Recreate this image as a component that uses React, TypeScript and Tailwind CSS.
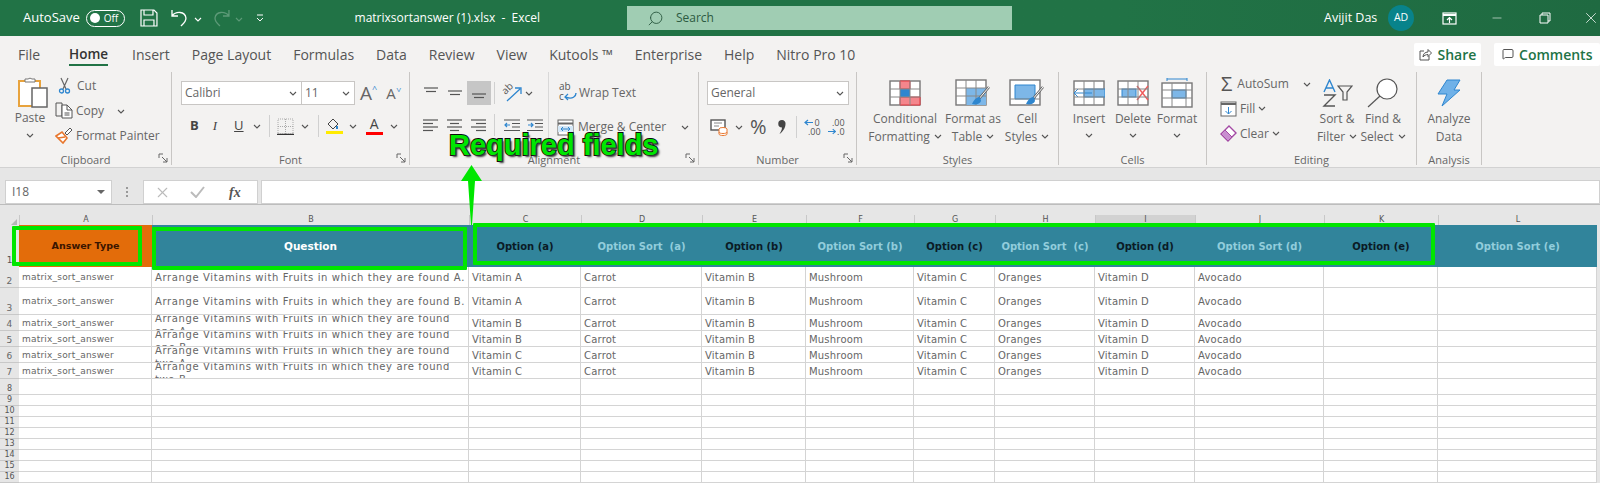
import React from 'react';
import { Search, Minus, X, MessageSquare } from 'lucide-react';

const ui = "font-['Open_Sans','Noto_Sans',sans-serif]";
const cellFont = "font-['DejaVu_Sans',sans-serif]";

const Chev = ({ color = '#555' }: { color?: string }) => (
  <svg width="8" height="5" viewBox="0 0 8 5" fill="none" stroke={color} strokeWidth="1.1" className="inline-block shrink-0">
    <path d="M1 1l3 3 3-3" />
  </svg>
);

const Launcher = () => (
  <svg width="10" height="10" viewBox="0 0 10 10" fill="none" stroke="#666" className="absolute right-[3px] bottom-[2px]">
    <path d="M1 5V1h4M4 4l5 5M9 5v4H5" />
  </svg>
);

function Group({ className, label, launcher, children }: { className: string; label: string; launcher?: boolean; children: React.ReactNode }) {
  return (
    <div className={`relative flex flex-col h-[93px] shrink-0 border-r border-[#c8c6c4] ${className}`}>
      <div className="flex-1 min-h-0">{children}</div>
      <div className="h-[13px] mb-[-1px] flex items-center justify-center text-[11px] text-[#666] leading-none">{label}</div>
      {launcher && <Launcher />}
    </div>
  );
}

function BigButton({ className, icon, lines, chevBelow, plain }: { className: string; icon: React.ReactNode; lines: string[]; chevBelow?: boolean; plain?: boolean }) {
  return (
    <div className={`flex flex-col items-center shrink-0 ${className}`}>
      <div className="h-[32px] mt-[5px] flex items-center justify-center">{icon}</div>
      <div className="mt-[1px] text-[12px] leading-[17.500px] text-[#666] text-center whitespace-nowrap">
        {lines.map((l, i) => (
          <div key={l} className="flex items-center justify-center gap-1">
            {l}
            {!plain && !chevBelow && i === lines.length - 1 && <Chev />}
          </div>
        ))}
        {chevBelow && <div className="flex h-[16px] items-center justify-center"><Chev /></div>}
      </div>
    </div>
  );
}

const Lines = ({ rows, y = 2 }: { rows: [number, number][]; y?: number }) => (
  <svg width="16" height="14" viewBox="0 0 16 14" stroke="#555" strokeWidth="1.2">
    {rows.map(([a, b], i) => (
      <path key={i} d={`M${a} ${y + i * 3.5}H${b}`} />
    ))}
  </svg>
);

const Grid = ({ children, w = 32 }: { children?: React.ReactNode; w?: number }) => (
  <svg width={w} height="26" viewBox="0 0 32 26" fill="none">
    <rect x="1" y="1" width="30" height="24" fill="#fff" stroke="#777" strokeWidth="1.4" />
    {children}
    <path d="M1 9h30M1 17h30M11 1v24M21 1v24" stroke="#888" strokeWidth="1" />
  </svg>
);

const Brush = () => (
  <g>
    <path d="M34 8L23 21" stroke="#666" strokeWidth="2.6" />
    <path d="M34 8L23 21" stroke="#fff" strokeWidth="1" />
    <path d="M25 18c-4 0-6 3-8 7 4 1 8 0 9-3z" fill="#2e86cf" />
  </g>
);

const PasteIcon = () => (
  <svg width="30" height="33" viewBox="0 0 30 33" fill="none">
    <path d="M1 6h21v25H1z" fill="#fff" stroke="#e8a33d" strokeWidth="2" />
    <path d="M7 7V4h3a3 3 0 0 1 4 0h3v3z" fill="#fff" stroke="#777" />
    <rect x="14" y="13" width="15" height="19" fill="#fff" stroke="#666" strokeWidth="1.5" />
  </svg>
);

const CutIcon = () => (
  <svg width="13" height="17" viewBox="0 0 13 17" fill="none">
    <path d="M3 1l5 11M10 1L5 12" stroke="#666" strokeWidth="1.2" />
    <circle cx="3.500" cy="14" r="2" stroke="#2e86cf" strokeWidth="1.3" />
    <circle cx="9.500" cy="14" r="2" stroke="#2e86cf" strokeWidth="1.3" />
  </svg>
);

const CopyIcon = () => (
  <svg width="18" height="17" viewBox="0 0 18 17" fill="none" stroke="#555">
    <path d="M1 1h6v13H1z" />
    <path d="M7 3h5l5 5v8H7z" fill="#fff" />
    <path d="M12 3v5h5M9.500 11h5M9.500 13h5" />
  </svg>
);

const PainterIcon = () => (
  <svg width="18" height="17" viewBox="0 0 18 17" fill="none">
    <path d="M1 9l6-4 5 6-4 5z" fill="#fff" stroke="#e8772e" strokeWidth="1.6" />
    <path d="M3 11l7-1" stroke="#e8772e" strokeWidth="1.4" />
    <path d="M10 6l5-5 2 2-5 5z" fill="#fff" stroke="#555" />
  </svg>
);

const ShareIcon = () => (
  <svg width="13" height="13" viewBox="0 0 13 13" fill="none" stroke="#555">
    <path d="M5 3H1v9h9V8" />
    <path d="M4 9c0-3 2-5 5-5V1.500l3.500 3.500L9 8.500V6.500c-2 0-4 1-5 2.500z" />
  </svg>
);

const AlignSel = () => (
  <div className="w-[24px] h-[24px] bg-[#c6c6c6] flex items-center justify-center">
    <Lines rows={[[1, 15], [3, 13]]} y={8} />
  </div>
);

const OrientIcon = () => (
  <span className="relative block w-[20px] h-[18px]">
    <svg width="20" height="18" viewBox="0 0 20 18" fill="none">
      <path d="M5 17L18 5M13 4h6v6" stroke="#2e86cf" strokeWidth="1.3" />
    </svg>
    <span className="absolute left-[-1px] top-[-1px] text-[10px] leading-[10px] text-[#555] -rotate-45">ab</span>
  </span>
);

const IndentIcon = ({ flip }: { flip?: boolean }) => (
  <svg width="16" height="14" viewBox="0 0 16 14" fill="none" stroke="#555" strokeWidth="1.2">
    <path d="M0 2h16M8 5.500h8M8 9h8M0 12.500h16" />
    <path d={flip ? 'M1 7h5M4 5l2 2-2 2' : 'M1 7h5M3 5L1 7l2 2'} stroke="#2e86cf" />
  </svg>
);

const WrapIcon = () => (
  <svg width="18" height="18" viewBox="0 0 18 18" fill="none">
    <path d="M6 13c8 3 11-1 11-4" stroke="#2e86cf" strokeWidth="1.4" />
    <path d="M9 10l-3 3 3 3" stroke="#2e86cf" strokeWidth="1.2" />
  </svg>
);

const MergeIcon = () => (
  <svg width="17" height="17" viewBox="0 0 17 17" fill="none">
    <rect x="1" y="1" width="15" height="15" fill="#fff" stroke="#666" />
    <path d="M1 4.500h15" stroke="#666" strokeWidth="2" />
    <rect x="1" y="7" width="15" height="6" fill="#d5e8f7" />
    <path d="M4 10h9M6 8l-2 2 2 2M11 8l2 2-2 2" stroke="#2e86cf" />
  </svg>
);

const AccountingIcon = () => (
  <svg width="18" height="18" viewBox="0 0 18 18" fill="none">
    <rect x="1" y="2" width="14" height="10" fill="#fff" stroke="#555" strokeWidth="1.4" />
    <path d="M4 5h8M4 8h5" stroke="#888" />
    <ellipse cx="13" cy="11" rx="4" ry="1.500" fill="#fff" stroke="#e8772e" />
    <path d="M9 11v5c0 2 8 2 8 0v-5M9 14c0 2 8 2 8 0" stroke="#e8772e" fill="#fff" />
  </svg>
);

const ArrowLeft = () => (
  <svg width="9" height="7" viewBox="0 0 9 7" fill="none" stroke="#2e86cf" strokeWidth="1.2"><path d="M9 3.500H1M4 1L1 3.500 4 6" /></svg>
);
const ArrowRight = () => (
  <svg width="9" height="7" viewBox="0 0 9 7" fill="none" stroke="#2e86cf" strokeWidth="1.2"><path d="M0 3.500h8M5 1l3 2.500L5 6" /></svg>
);

const SortIcon = () => (
  <svg width="15" height="28" viewBox="0 0 15 28" fill="none">
    <path d="M2 13L7.500 1 13 13M4 9h7" stroke="#2e86cf" strokeWidth="1.4" />
    <path d="M2 16h11L2 27h11" stroke="#555" strokeWidth="1.4" />
  </svg>
);

function Cell({ className = '', children }: { className?: string; children?: React.ReactNode }) {
  return <div className={`border-r border-b border-[#d4d4d4] overflow-hidden flex items-center pl-[3px] pr-[2px] pt-[1px] ${className}`}>{children}</div>;
}

const colTemplate = 'grid grid-cols-[19px_133px_317px_112px_121px_104px_108px_81px_100px_100px_129px_114px_159px_3px]';
const columns = ['A', 'B', 'C', 'D', 'E', 'F', 'G', 'H', 'I', 'J', 'K', 'L'];

const headers = [
  ['Answer Type', 'bg-[#e36c0a] text-[#3a1500] text-[9.500px] pt-[1px]'],
  ['Question', 'bg-[#31849b] text-white text-[10.500px] pt-[1px]'],
  ['Option (a)', 'bg-[#31849b] text-[#0b1b26]'],
  ['Option Sort  (a)', 'bg-[#31849b] text-[#92cddc]'],
  ['Option (b)', 'bg-[#31849b] text-[#0b1b26]'],
  ['Option Sort (b)', 'bg-[#31849b] text-[#92cddc]'],
  ['Option (c)', 'bg-[#31849b] text-[#0b1b26]'],
  ['Option Sort  (c)', 'bg-[#31849b] text-[#92cddc]'],
  ['Option (d)', 'bg-[#31849b] text-[#0b1b26]'],
  ['Option Sort (d)', 'bg-[#31849b] text-[#92cddc]'],
  ['Option (e)', 'bg-[#31849b] text-[#0b1b26]'],
  ['Option Sort (e)', 'bg-[#31849b] text-[#92cddc]'],
];

const q = 'Arrange Vitamins with Fruits in which they are found';
const rows = [
  { n: 2, h: 'h-[21px]', q: `${q} A.`, a: 'Vitamin A', wrap: '' },
  { n: 3, h: 'h-[27px]', q: `${q} B.`, a: 'Vitamin A', wrap: '' },
  { n: 4, h: 'h-[16px]', q: `${q} one\u00a0A.`, a: 'Vitamin B', wrap: 'pt-[4px]' },
  { n: 5, h: 'h-[16px]', q: `${q} one\u00a0B.`, a: 'Vitamin B', wrap: 'pt-[4px]' },
  { n: 6, h: 'h-[16px]', q: `${q} two\u00a0A.`, a: 'Vitamin C', wrap: 'pt-[4px]' },
  { n: 7, h: 'h-[16px]', q: `${q} two\u00a0B.`, a: 'Vitamin C', wrap: 'pt-[4px]' },
];
const emptyRows = [
  { n: 8, h: 'h-[16px]' },
  { n: 9, h: 'h-[11px]' },
  { n: 10, h: 'h-[11px]' },
  { n: 11, h: 'h-[11px]' },
  { n: 12, h: 'h-[11px]' },
  { n: 13, h: 'h-[11px]' },
  { n: 14, h: 'h-[11px]' },
  { n: 15, h: 'h-[11px]' },
  { n: 16, h: 'h-[11px]' },
];
const tabs = ['Insert', 'Page Layout', 'Formulas', 'Data', 'Review', 'View', 'Kutools ™', 'Enterprise', 'Help', 'Nitro Pro 10'];

function TitleBar() {
  return (
    <div className="h-[36px] bg-gradient-to-r from-[#217346] from-70% to-[#1f6a41] flex items-center text-white whitespace-nowrap">
      <span className="ml-[23px] text-[13px]">AutoSave</span>
      <div className="ml-[6px] w-[39px] h-[17px] rounded-full border border-white flex items-center gap-[4px] pl-[3px] text-[10px]">
        <span className="w-[10px] h-[10px] rounded-full bg-white" />Off
      </div>
      <svg className="ml-[15px]" width="18" height="18" viewBox="0 0 18 18" fill="none" stroke="#fff" strokeWidth="1.2">
        <path d="M1 1h13l3 3v13H1zM4 1v5h9V1M4 17v-6h10v6" />
      </svg>
      <svg className="ml-[12px]" width="20" height="18" viewBox="0 0 20 18" fill="none" stroke="#fff" strokeWidth="1.3">
        <path d="M2 1v6h6M2 7c4-5 13-5 14 2 0 4-3 6-5 8" />
      </svg>
      <span className="ml-[4px]"><Chev color="#fff" /></span>
      <svg className="ml-[9px]" width="20" height="18" viewBox="0 0 20 18" fill="none" stroke="#5d9a78" strokeWidth="1.3">
        <path d="M18 1v6h-6M18 7c-4-5-13-5-14 2 0 4 3 6 5 8" />
      </svg>
      <span className="ml-[4px]"><Chev color="#5d9a78" /></span>
      <svg className="ml-[13px]" width="8" height="8" viewBox="0 0 8 8" fill="none" stroke="#fff">
        <path d="M1 1h6M1 4l3 3 3-3" />
      </svg>
      <span className="ml-[91px] w-[273px] text-[12px] whitespace-pre">matrixsortanswer (1).xlsx  -  Excel</span>
      <div className="w-[386px] h-[24px] bg-[#a0cdb3] flex items-center text-[#2d5a41] text-[12px]">
        <Search size={17} strokeWidth={1.3} className="ml-[20px] mr-[12px] -scale-x-100" />Search
      </div>
      <span className="ml-[312px] w-[53px] text-[12.500px]">Avijit Das</span>
      <div className="ml-[11px] w-[26px] h-[26px] shrink-0 rounded-full bg-[#08838b] flex items-center justify-center text-[10.500px]">AD</div>
      <svg className="ml-[28px] shrink-0" width="15" height="13" viewBox="0 0 15 13" fill="none" stroke="#fff" strokeWidth="1.2">
        <rect x="1" y="1" width="13" height="11" />
        <path d="M1 3h13" strokeWidth="2" />
        <path d="M7.500 11V6M5 8l2.500-2.500L10 8" />
      </svg>
      <Minus size={14} strokeWidth={1} className="ml-[33px] shrink-0" />
      <svg className="ml-[35px] shrink-0" width="12" height="12" viewBox="0 0 12 12" fill="none" stroke="#fff">
        <path d="M3 3V1h8v8H9M1 3h8v8H1z" />
      </svg>
      <X size={18} strokeWidth={1} className="ml-[31px] shrink-0" />
    </div>
  );
}

function TabRow() {
  return (
    <div className="h-[36px] bg-[#f3f2f1] flex items-center text-[14px] text-[#555] whitespace-nowrap">
      <span className="ml-[18px] w-[20px]">File</span>
      <span className="relative ml-[31px] font-semibold h-full w-[40px] flex items-center text-[#333] text-[13.500px]">
        Home
        <span className="absolute left-0 right-0 bottom-[6px] h-[2px] bg-[#217346]" />
      </span>
      <div className="ml-[24px] w-[788px] flex gap-[22px]">
        {tabs.map((t) => <span key={t}>{t}</span>)}
      </div>
      <div className="ml-[525px] w-[70px] h-[23px] bg-white rounded-[2px] flex items-center justify-center gap-[6px] text-[#217346] font-semibold">
        <ShareIcon />Share
      </div>
      <div className="ml-[13px] w-[110px] h-[23px] bg-white rounded-[2px] flex items-center pl-[8px] gap-[5px] text-[#217346] font-semibold">
        <MessageSquare size={12} color="#555" />Comments
      </div>
    </div>
  );
}

function Ribbon() {
  return (
    <div className="h-[96px] bg-[#f3f2f1] border-b border-[#d2d2d2] flex text-[12px] text-[#666]">
      <Group className="w-[172px]" label="Clipboard" launcher>
        <div className="flex">
          <div className="w-[55px] pl-[5px] pt-[3px] flex flex-col items-center">
            <span className="ml-[6px]"><PasteIcon /></span>
            <span className="mt-[1px]">Paste</span>
            <span className="-mt-[1px]"><Chev /></span>
          </div>
          <div className="pt-[1px]">
            <div className="h-[25px] flex items-center gap-[6px] pl-[3px]"><CutIcon />Cut</div>
            <div className="h-[25px] flex items-center gap-[3px]"><CopyIcon />Copy<span className="ml-[10px]"><Chev /></span></div>
            <div className="h-[25px] flex items-center gap-[3px]"><PainterIcon />Format Painter</div>
          </div>
        </div>
      </Group>

      <Group className="w-[238px]" label="Font" launcher>
        <div className="flex flex-col pl-[9px] pt-[9px]">
          <div className="flex items-center">
            <div className="w-[121px] h-[24px] bg-white border border-[#c8c6c4] flex items-center justify-between pl-[3px] pr-[4px]">Calibri<Chev /></div>
            <div className="w-[53px] h-[24px] bg-white border border-l-0 border-[#c8c6c4] flex items-center justify-between pl-[3px] pr-[4px]">11<Chev /></div>
            <span className="ml-[5px] text-[19px] leading-none">A</span>
            <span className="text-[9px] text-[#2e86cf] -mt-2">^</span>
            <span className="ml-[9px] text-[15px] leading-none">A</span>
            <span className="text-[9px] text-[#2e86cf] -mt-2 rotate-180">^</span>
          </div>
          <div className="flex items-center h-[24px] mt-[9px] text-[#444]">
            <span className="ml-[9px] font-bold text-[13px]">B</span>
            <span className="ml-[14px] italic text-[13px] font-['Liberation_Serif',serif]">I</span>
            <span className="ml-[17px] underline text-[13px]">U</span>
            <span className="ml-[9px]"><Chev /></span>
            <span className="ml-[8px] h-[22px] border-l border-[#d0d0d0]" />
            <svg className="ml-[7px]" width="17" height="17" viewBox="0 0 17 17" fill="none" stroke="#aaa">
              <path d="M1 1h15v15H1zM8.500 1v15M1 8.500h15" strokeDasharray="1 1" />
              <path d="M0 16.500h17" stroke="#333" strokeWidth="1.500" />
            </svg>
            <span className="ml-[7px]"><Chev /></span>
            <span className="ml-[9px] h-[22px] border-l border-[#d0d0d0]" />
            <div className="ml-[7px] w-[17px] flex flex-col items-center">
              <svg width="14" height="13" viewBox="0 0 14 13" fill="none" stroke="#444">
                <path d="M1 6l5-5 5 5-5 5z" />
                <path d="M10 8v3" stroke="#2e86cf" strokeWidth="2" />
              </svg>
              <span className="w-[17px] h-[3px] bg-[#ffeb00]" />
            </div>
            <span className="ml-[6px]"><Chev /></span>
            <div className="ml-[9px] w-[17px] flex flex-col items-center leading-none text-[14px]">
              A
              <span className="w-[17px] h-[3px] bg-[#f00] mt-[1px]" />
            </div>
            <span className="ml-[7px]"><Chev /></span>
          </div>
        </div>
      </Group>

      <Group className="w-[289px]" label="Alignment" launcher>
        <div className="flex">
          <div className="w-[139px] border-r border-[#d8d8d8] h-[80px] flex flex-col pl-[13px] pt-[9px]">
            <div className="flex items-center h-[24px]">
              <Lines rows={[[1, 15], [3, 13]]} />
              <span className="ml-[8px]"><Lines rows={[[1, 15], [3, 13]]} y={5} /></span>
              <span className="ml-[4px]"><AlignSel /></span>
              <span className="ml-[3px] h-[22px] border-l border-[#d0d0d0]" />
              <span className="ml-[7px]"><OrientIcon /></span>
              <span className="ml-[3px]"><Chev /></span>
            </div>
            <div className="flex items-center h-[24px] mt-[8px]">
              <Lines rows={[[0, 15], [0, 10], [0, 15], [0, 10]]} />
              <span className="ml-[8px]"><Lines rows={[[0, 15], [3, 12], [0, 15], [3, 12]]} /></span>
              <span className="ml-[8px]"><Lines rows={[[0, 15], [5, 15], [0, 15], [5, 15]]} /></span>
              <span className="ml-[7px] h-[22px] border-l border-[#d0d0d0]" />
              <span className="ml-[9px]"><IndentIcon /></span>
              <span className="ml-[7px]"><IndentIcon flip /></span>
            </div>
          </div>
          <div className="flex-1 flex flex-col pl-[8px] pt-[9px]">
            <div className="flex items-center h-[24px] gap-[2px] pl-[2px]">
              <span className="relative w-[18px] h-[18px]">
                <WrapIcon />
                <span className="absolute left-0 -top-[3px] text-[10px] leading-[10px] text-[#555]">ab<br />c</span>
              </span>
              Wrap Text
            </div>
            <div className="flex items-center h-[24px] mt-[10px] gap-[4px]">
              <MergeIcon />Merge &amp; Center<span className="ml-[11px]"><Chev /></span>
            </div>
          </div>
        </div>
      </Group>

      <Group className="w-[158px]" label="Number" launcher>
        <div className="flex flex-col pl-[8px] pt-[9px]">
          <div className="w-[142px] h-[24px] bg-white border border-[#c8c6c4] flex items-center justify-between pl-[3px] pr-[4px]">General<Chev /></div>
          <div className="flex items-center h-[24px] mt-[10px]">
            <span className="ml-[3px]"><AccountingIcon /></span>
            <span className="ml-[7px]"><Chev /></span>
            <span className="ml-[7px] text-[20px] leading-none text-[#555]">%</span>
            <svg className="ml-[11px]" width="8" height="14" viewBox="0 0 8 14" fill="#444">
              <path d="M4 0a3.500 3.500 0 0 1 3.500 4c0 4-3 8-6 10 1-2 2.500-4 2.500-6.500a3.500 3.500 0 0 1 0-7.500z" />
            </svg>
            <span className="ml-[10px] h-[22px] border-l border-[#d0d0d0]" />
            <div className="ml-[7px] w-[17px] flex flex-col text-[9px] leading-[9px] text-[#555]">
              <span className="flex items-center"><ArrowLeft /><span className="ml-[2px]">0</span></span>
              <span className="text-right">.00</span>
            </div>
            <div className="ml-[7px] w-[17px] flex flex-col text-[9px] leading-[9px] text-[#555]">
              <span className="text-right">.00</span>
              <span className="flex items-center"><ArrowRight /><span className="ml-[1px]">.0</span></span>
            </div>
          </div>
        </div>
      </Group>

      <Group className="w-[202px]" label="Styles">
        <div className="flex pl-[17px]">
          <BigButton className="w-[62px]" lines={['Conditional', 'Formatting']} icon={
            <Grid><path d="M11 1h10v8H11zM11 17h20v8H11z" fill="#f4868c" stroke="#e0353c" /><rect x="11" y="9" width="10" height="8" fill="#2e86cf" /></Grid>
          } />
          <BigButton className="w-[66px] ml-[4px]" lines={['Format as', 'Table']} icon={
            <svg width="37" height="28" viewBox="0 0 37 28" fill="none">
              <rect x="1" y="1" width="30" height="25" fill="#fff" stroke="#777" strokeWidth="1.4" />
              <path d="M11 9h20v17H11z" fill="#7db7e8" />
              <path d="M1 9h30M1 17h30M11 1v25M21 1v25" stroke="#888" />
              <Brush />
            </svg>
          } />
          <BigButton className="w-[46px] -ml-[2px]" lines={['Cell', 'Styles']} icon={
            <svg width="37" height="28" viewBox="0 0 37 28" fill="none">
              <rect x="1" y="1" width="30" height="25" fill="#fff" stroke="#777" strokeWidth="1.4" />
              <path d="M6 6h20v14H6z" fill="#7db7e8" stroke="#2e86cf" />
              <path d="M1 20h30" stroke="#888" />
              <Brush />
            </svg>
          } />
        </div>
      </Group>

      <Group className="w-[148px]" label="Cells">
        <div className="flex pl-[8px]">
          <BigButton chevBelow className="w-[44px]" lines={['Insert']} icon={
            <Grid><rect x="11" y="9" width="21" height="8" fill="#7db7e8" stroke="#2e86cf" /><path d="M19 13H1M5 9l-4 4 4 4" stroke="#2e86cf" /></Grid>
          } />
          <BigButton chevBelow className="w-[44px]" lines={['Delete']} icon={
            <Grid><rect x="5" y="9" width="14" height="8" fill="#7db7e8" stroke="#2e86cf" /><path d="M20 6l11 14M31 6L20 20" stroke="#f05a5a" strokeWidth="1.4" /></Grid>
          } />
          <BigButton chevBelow className="w-[44px]" lines={['Format']} icon={
            <svg width="32" height="30" viewBox="0 0 32 30" fill="none">
              <path d="M6 1h20M6 0v3M26 0v3" stroke="#2e86cf" />
              <rect x="1" y="5" width="30" height="24" fill="#fff" stroke="#777" strokeWidth="1.4" />
              <rect x="11" y="12" width="14" height="8" fill="#7db7e8" stroke="#2e86cf" />
              <path d="M1 12h30M1 20h30M11 5v24M25 5v24" stroke="#888" />
            </svg>
          } />
        </div>
      </Group>

      <Group className="w-[210px]" label="Editing">
        <div className="flex pl-[13px]">
          <div className="w-[94px]">
            <div className="h-[24px] flex items-center gap-[5px] pl-[1px]"><span className="text-[20px] leading-none text-[#555]">Σ</span>AutoSum<span className="ml-[9px]"><Chev /></span></div>
            <div className="h-[25px] flex items-center gap-[3px]">
              <svg width="17" height="16" viewBox="0 0 17 16" fill="none">
                <rect x="1" y="1" width="15" height="14" fill="#fff" stroke="#666" />
                <path d="M1 3h15" stroke="#666" strokeWidth="2" />
                <path d="M8.500 6v7M5.500 10l3 3 3-3" stroke="#2e86cf" />
              </svg>
              Fill<Chev />
            </div>
            <div className="h-[25px] flex items-center gap-[3px]">
              <svg width="17" height="17" viewBox="0 0 17 17" fill="none">
                <path d="M1 9l8-8 7 7-8 8z" fill="#fff" stroke="#a349a4" strokeWidth="1.4" />
                <path d="M1 9l4-4 7 7-4 4z" fill="#c98fd0" stroke="#a349a4" />
              </svg>
              Clear<Chev />
            </div>
          </div>
          <BigButton className="w-[46px]" lines={['Sort &', 'Filter']} icon={
            <div className="flex items-center">
              <SortIcon />
              <svg width="16" height="18" viewBox="0 0 16 18" fill="none" stroke="#555" strokeWidth="1.2"><path d="M1 2h14L10 8v8H6V8z" /></svg>
            </div>
          } />
          <BigButton className="w-[46px]" lines={['Find &', 'Select']} icon={
            <svg width="32" height="30" viewBox="0 0 32 30" fill="none" stroke="#555" strokeWidth="1.2">
              <circle cx="20" cy="11" r="10" fill="#fff" />
              <path d="M13 18L1 29" />
            </svg>
          } />
        </div>
      </Group>

      <Group className="w-[65px]" label="Analysis">
        <BigButton plain className="w-full" lines={['Analyze', 'Data']} icon={
          <svg width="24" height="28" viewBox="0 0 24 28" fill="none">
            <path d="M10 1h13l-6 10h6L5 27l5-12H1z" fill="#6fb1e8" stroke="#2e86cf" />
          </svg>
        } />
      </Group>
    </div>
  );
}

function FormulaBar() {
  return (
    <div className="h-[36px] bg-[#e6e6e6] flex items-end text-[#666]">
      <div className="ml-[5px] w-[107px] h-[24px] bg-white border border-[#d0d0d0] flex items-center justify-between px-[6px] text-[12px]">
        I18
        <span className="w-0 h-0 border-x-[4px] border-x-transparent border-t-[4px] border-t-[#666]" />
      </div>
      <span className="ml-[14px] h-[24px] flex flex-col justify-center gap-[2px]">
        <span className="w-[2px] h-[2px] bg-[#999]" /><span className="w-[2px] h-[2px] bg-[#999]" /><span className="w-[2px] h-[2px] bg-[#999]" />
      </span>
      <div className="ml-[15px] w-[115px] h-[24px] bg-white border border-[#d0d0d0] flex items-center">
        <X size={17} strokeWidth={1.5} color="#bbb" className="ml-[10px]" />
        <svg className="ml-[19px]" width="15" height="12" viewBox="0 0 15 12" fill="none" stroke="#bbb" strokeWidth="2"><path d="M1 6l5 5 8-10" /></svg>
        <span className="ml-[24px] italic font-bold text-[14px] text-[#555] font-['Liberation_Serif',serif]">fx</span>
      </div>
      <div className="ml-[3px] flex-1 h-[24px] bg-white border border-[#d0d0d0]" />
    </div>
  );
}

function Sheet() {
  return (
    <div className={cellFont}>
      <div className={`${colTemplate} h-[21px] bg-[#e6e6e6] border-t border-[#bdbdbd] text-[8px] text-[#555] items-end`}>
        <div className="h-[10px] flex items-end justify-end pr-[2px]">
          <span className="w-0 h-0 border-l-[6px] border-l-transparent border-b-[6px] border-b-[#b5b5b5]" />
        </div>
        {columns.map((c) => (
          <div key={c} className={`h-[10px] leading-[10px] text-center border-l border-[#c8c8c8] ${c === 'I' ? 'bg-[#d2d2d2]' : ''}`}>{c}</div>
        ))}
      </div>
      <div className={`${colTemplate} h-[42px] text-[10px] font-bold`}>
        <div className="bg-[#e6e6e6] text-[9px] text-[#555] font-normal flex items-end justify-center">1</div>
        {headers.map(([t, c]) => (
          <div key={t} className={`flex items-center justify-center whitespace-pre ${c}`}>{t}</div>
        ))}
        <div className="bg-[#e6e6e6]" />
      </div>
      {rows.map((r) => (
        <div key={r.n} className={`${colTemplate} ${r.h} text-[10px] leading-[13px] text-[#666] tracking-[0.02em]`}>
          <div className="bg-[#e6e6e6] border-b border-[#c8c8c8] text-[9px] flex items-end justify-center leading-[12px]">{r.n}</div>
          <Cell className="text-[9px]">matrix_sort_answer</Cell>
          <Cell className={r.wrap}><span className="tracking-[0.62px]">{r.q}</span></Cell>
          <Cell>{r.a}</Cell>
          <Cell>Carrot</Cell>
          <Cell>Vitamin B</Cell>
          <Cell>Mushroom</Cell>
          <Cell>Vitamin C</Cell>
          <Cell>Oranges</Cell>
          <Cell>Vitamin D</Cell>
          <Cell>Avocado</Cell>
          <Cell />
          <Cell />
          <div className="bg-[#e6e6e6]" />
        </div>
      ))}
      {emptyRows.map((r) => (
        <div key={r.n} className={`${colTemplate} ${r.h} text-[8px] text-[#555]`}>
          <div className="bg-[#e6e6e6] border-b border-[#c8c8c8] flex items-end justify-center leading-[10px]">{r.n}</div>
          {columns.map((c) => <Cell key={c} />)}
          <div className="bg-[#e6e6e6]" />
        </div>
      ))}
    </div>
  );
}

// green annotations sit on top of the screenshot
function Annotations() {
  const box = 'absolute border-[4px] border-[#00e600] rounded-[1px]';
  return (
    <>
      <div className={`${box} left-[12px] top-[226px] w-[130px] h-[40px]`} />
      <div className={`${box} left-[152px] top-[227px] w-[315px] h-[43px]`} />
      <div className={`${box} left-[473px] top-[223px] w-[962px] h-[42px]`} />
      <svg className="absolute left-[460px] top-[164px]" width="24" height="62" viewBox="0 0 24 62">
        <path d="M11.500 1L22 17h-7l-3 44h-1L8 17H1z" fill="#00e600" />
      </svg>
      <div className="absolute left-[449px] top-[128px] text-[29px] leading-[34px] font-bold text-[#00e600] font-['Liberation_Sans',sans-serif] whitespace-nowrap [-webkit-text-stroke:2px_#0a0a0a] [paint-order:stroke_fill] [text-shadow:2px_2px_2px_#333]">
        Required fields
      </div>
    </>
  );
}

export default function App() {
  return (
    <div className={`relative w-[1600px] h-[483px] overflow-hidden bg-white ${ui}`}>
      <TitleBar />
      <TabRow />
      <Ribbon />
      <FormulaBar />
      <Sheet />
      <Annotations />
    </div>
  );
}
